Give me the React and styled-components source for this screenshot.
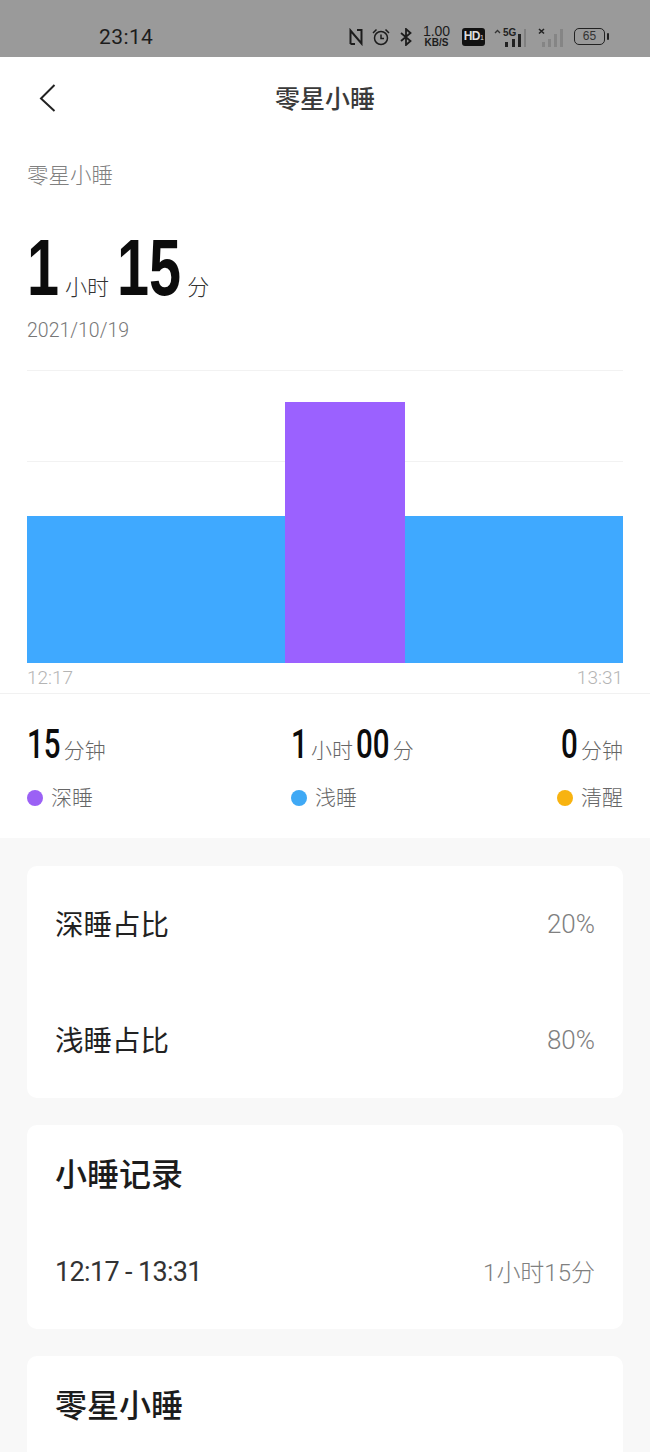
import React from "react";
import styled, { createGlobalStyle } from "styled-components";

const CJK = `"Noto Sans CJK SC", "Noto Sans", sans-serif`;

const GlobalStyle = createGlobalStyle`
  html, body {
    margin: 0;
    padding: 0;
    background: #f8f8f8;
  }
  body {
    font-family: "Roboto", ${CJK};
    height: 1452px;
    overflow: hidden;
  }
`;

/* status bar */

const StatusBar = styled.div`
  height: 57px;
  background: #9a9a9a;
  display: flex;
  align-items: center;
  padding: 16px 42px 0 99px;
  box-sizing: border-box;
  justify-content: space-between;
  color: #1c1c1c;
`;

const Clock = styled.span`
  font-size: 21px;
  letter-spacing: 0.4px;
`;

const StatusIcons = styled.div`
  display: flex;
  align-items: center;
  gap: 9px;
`;

const Speed = styled.div`
  display: flex;
  flex-direction: column;
  align-items: center;
  width: 29px;
  font-family: "Liberation Sans", sans-serif;
  line-height: 11px;
  .top { font-size: 14px; }
  .bottom { font-size: 10px; font-weight: 700; }
`;

const HdBadge = styled.span`
  background: #111;
  color: #ddd;
  border-radius: 3px;
  font: 700 12px/17px "Liberation Sans", sans-serif;
  width: 23px;
  height: 18px;
  margin-left: 2px;
  text-align: center;
  letter-spacing: -0.5px;
  small { font-size: 7px; font-weight: 400; }
`;

const Battery = styled.div`
  width: 29px;
  height: 15px;
  margin: 0 3px 0 2px;
  border: 1.5px solid #222;
  border-radius: 5px;
  font: 400 12px/15px "Liberation Sans", sans-serif;
  text-align: center;
  color: #333;
  position: relative;
  &::after {
    content: "";
    position: absolute;
    right: -5px;
    top: 4px;
    width: 2px;
    height: 7px;
    background: #222;
    border-radius: 1px;
  }
`;

const NfcIcon = () => (
  <svg width="14" height="18" viewBox="0 0 14 18" fill="none" stroke="#1c1c1c" strokeWidth="2">
    <path d="M1.5 16V2.5L12.5 15.5V2H8" />
    <path d="M1.5 16H6" />
  </svg>
);

const AlarmIcon = () => (
  <svg width="18" height="18" viewBox="0 0 18 18" fill="none" stroke="#1c1c1c" strokeWidth="1.5">
    <circle cx="9" cy="10" r="6.5" />
    <path d="M9 6.5V10.5H12" />
    <path d="M1 5L4.5 1.5M17 5L13.5 1.5" />
  </svg>
);

const BluetoothIcon = () => (
  <svg width="14" height="18" viewBox="0 0 14 18" fill="none" stroke="#1c1c1c" strokeWidth="1.8">
    <path d="M2 5L11.5 13L7 17V1L11.5 5L2 13" />
  </svg>
);

const SignalIcon = ({ active }) =>
  active ? (
    <svg width="32" height="20" viewBox="0 0 32 20">
      <path d="M1 6L3.5 3.5L6 6" fill="none" stroke="#333" strokeWidth="1.3" />
      <text x="9" y="9" fontSize="10" fontWeight="700" fontFamily="Liberation Sans" fill="#222">5G</text>
      <rect x="11" y="15" width="3" height="5" fill="#222" />
      <rect x="18" y="12" width="3" height="8" fill="#222" />
      <rect x="24" y="7" width="3" height="13" fill="#222" />
      <rect x="30" y="2" width="2" height="18" fill="#808080" />
    </svg>
  ) : (
    <svg width="28" height="20" viewBox="-4 0 28 20">
      <path d="M0 2L5 6.5M5 2L0 6.5" stroke="#222" strokeWidth="1.6" />
      <rect x="3" y="15" width="3" height="5" fill="#858585" />
      <rect x="9" y="12" width="3" height="8" fill="#858585" />
      <rect x="15" y="7" width="3" height="13" fill="#858585" />
      <rect x="21" y="2" width="3" height="18" fill="#858585" />
    </svg>
  );

/* header */

const TopSection = styled.div`
  background: #fff;
  height: 781px;
  display: flex;
  flex-direction: column;
`;

const NavBar = styled.div`
  height: 84px;
  position: relative;
  display: flex;
  align-items: center;
  justify-content: center;
`;

const BackButton = styled.svg`
  position: absolute;
  left: 39px;
  top: 27px;
`;

const Title = styled.h1`
  margin: 0;
  font-size: 25px;
  line-height: 1;
  font-weight: 500;
  color: #3a3a3a;
`;

const Summary = styled.div`
  padding: 21px 27px 0;
`;

const SectionLabel = styled.div`
  font-size: 21.5px;
  line-height: 28px;
  color: #808080;
  font-weight: 300;
`;

const TotalRow = styled.div`
  display: flex;
  align-items: baseline;
  margin-top: 37px;
  height: 82px;
  color: #0c0c0c;
`;

// the digits in the app are a condensed face, squeezed here from a normal one
const Squeezed = styled.span`
  display: inline-block;
  transform: scaleX(0.72);
  transform-origin: left center;
  margin-right: calc(-0.28 * 0.556em * ${(p) => p.$chars});
  color: #0c0c0c;
`;

const BigNum = styled(Squeezed)`
  font-family: "Liberation Sans", sans-serif;
  font-weight: 700;
  font-size: 80px;
  line-height: 82px;
`;

const BigUnit = styled.span`
  font-size: 22px;
  color: #333;
  font-weight: 300;
  margin: 0 8px 0 6px;
`;

const DateText = styled.div`
  font-size: 19.5px;
  line-height: 26px;
  color: #777;
  margin-top: 9px;
  font-weight: 300;
`;

/* chart */

const ChartWrap = styled.div`
  margin: 26px 27px 0;
`;

const AxisLabels = styled.div`
  display: flex;
  justify-content: space-between;
  font-size: 19px;
  line-height: 28px;
  height: 29px;
  color: #b4b4b4;
  font-weight: 300;
`;

const Divider = styled.div`
  height: 1px;
  background: #f1f1f1;
`;

/* stats */

const Stats = styled.div`
  display: grid;
  grid-template-columns: 264px 1fr auto;
  padding: 28px 27px 0;
`;

const StatColumn = styled.div`
  display: flex;
  flex-direction: column;
  align-items: ${(p) => p.$align || "flex-start"};
`;

const StatValue = styled.div`
  display: flex;
  align-items: baseline;
  height: 44px;
`;

const StatNum = styled(Squeezed)`
  font-family: "Roboto", sans-serif;
  font-weight: 500;
  font-size: 41px;
  line-height: 44px;
`;

const StatUnit = styled.span`
  font-size: 21px;
  color: #666;
  font-weight: 300;
  margin: 0 3px 0 3px;
  &:last-child { margin-right: 0; }
`;

const Legend = styled.div`
  display: flex;
  align-items: center;
  gap: 8px;
  margin-top: 16px;
  font-size: 21px;
  line-height: 32px;
  color: #666;
  font-weight: 300;
`;

const Dot = styled.span`
  width: 16px;
  height: 16px;
  border-radius: 50%;
  background: ${(p) => p.$color};
`;

/* cards */

const Cards = styled.div`
  padding: 28px 27px 0;
  display: flex;
  flex-direction: column;
  gap: 27px;
`;

const Card = styled.div`
  background: #fff;
  border-radius: 10px;
  padding: 0 28px;
  min-height: ${(p) => p.$minHeight || 0};
`;

const RatioRow = styled.div`
  display: flex;
  justify-content: space-between;
  align-items: center;
  height: 116px;
`;

const RowLabel = styled.span`
  font-size: 28.5px;
  color: #222;
  margin-top: -4px;
`;

const RowValue = styled.span`
  font-size: 26px;
  color: #808080;
  font-weight: 300;
`;

const Duration = styled.span`
  font-size: 24px;
  color: #808080;
  font-weight: 300;
  margin-top: -2px;
`;

const CardTitle = styled.div`
  font-size: 32px;
  line-height: 40px;
  font-weight: 500;
  color: #1c1c1c;
  padding-top: 30px;
`;

const RecordRow = styled.div`
  display: flex;
  justify-content: space-between;
  align-items: center;
  height: 44px;
  margin-top: 54px;
  padding-bottom: 36px;
`;

const TimeRange = styled.span`
  font-size: 27px;
  color: #333;
  letter-spacing: -0.65px;
  margin-top: 2px;
`;

const SleepChart = () => (
  <svg width="596" height="294" viewBox="0 0 596 294" style={{ display: "block" }}>
    <rect x="0" y="0" width="596" height="1" fill="#f2f2f2" />
    <rect x="0" y="91" width="596" height="1" fill="#f2f2f2" />
    <rect x="0" y="146" width="258" height="147" fill="#3fa9ff" />
    <rect x="378" y="146" width="218" height="147" fill="#3fa9ff" />
    <rect x="258" y="32" width="120" height="261" fill="#9b61ff" />
  </svg>
);

export default function App() {
  return (
    <>
      <GlobalStyle />
      <StatusBar>
        <Clock>23:14</Clock>
        <StatusIcons>
          <NfcIcon />
          <AlarmIcon />
          <BluetoothIcon />
          <Speed>
            <span className="top">1.00</span>
            <span className="bottom">KB/S</span>
          </Speed>
          <HdBadge>HD<small>1</small></HdBadge>
          <SignalIcon active />
          <SignalIcon />
          <Battery>65</Battery>
        </StatusIcons>
      </StatusBar>
      <TopSection>
        <NavBar>
          <BackButton width="18" height="30" viewBox="0 0 18 30" fill="none" stroke="#222" strokeWidth="2">
            <path d="M15.5 1L2 14.5L15.5 27" />
          </BackButton>
          <Title>零星小睡</Title>
        </NavBar>
        <Summary>
          <SectionLabel>零星小睡</SectionLabel>
          <TotalRow>
            <BigNum $chars={1}>1</BigNum>
            <BigUnit>小时</BigUnit>
            <BigNum $chars={2}>15</BigNum>
            <BigUnit>分</BigUnit>
          </TotalRow>
          <DateText>2021/10/19</DateText>
        </Summary>
        <ChartWrap>
          <SleepChart />
          <AxisLabels>
            <span>12:17</span>
            <span>13:31</span>
          </AxisLabels>
        </ChartWrap>
        <Divider />
        <Stats>
          <StatColumn>
            <StatValue>
              <StatNum $chars={2}>15</StatNum>
              <StatUnit>分钟</StatUnit>
            </StatValue>
            <Legend>
              <Dot $color="#9b61f5" />
              深睡
            </Legend>
          </StatColumn>
          <StatColumn>
            <StatValue>
              <StatNum $chars={1}>1</StatNum>
              <StatUnit>小时</StatUnit>
              <StatNum $chars={2}>00</StatNum>
              <StatUnit>分</StatUnit>
            </StatValue>
            <Legend>
              <Dot $color="#3fa9f5" />
              浅睡
            </Legend>
          </StatColumn>
          <StatColumn $align="flex-end">
            <StatValue>
              <StatNum $chars={1}>0</StatNum>
              <StatUnit>分钟</StatUnit>
            </StatValue>
            <Legend>
              <Dot $color="#f8b310" />
              清醒
            </Legend>
          </StatColumn>
        </Stats>
      </TopSection>
      <Cards>
        <Card>
          <RatioRow>
            <RowLabel>深睡占比</RowLabel>
            <RowValue>20%</RowValue>
          </RatioRow>
          <RatioRow>
            <RowLabel>浅睡占比</RowLabel>
            <RowValue>80%</RowValue>
          </RatioRow>
        </Card>
        <Card>
          <CardTitle>小睡记录</CardTitle>
          <RecordRow>
            <TimeRange>12:17 - 13:31</TimeRange>
            <Duration>1小时15分</Duration>
          </RecordRow>
        </Card>
        <Card $minHeight="120px">
          <CardTitle>零星小睡</CardTitle>
        </Card>
      </Cards>
    </>
  );
}
